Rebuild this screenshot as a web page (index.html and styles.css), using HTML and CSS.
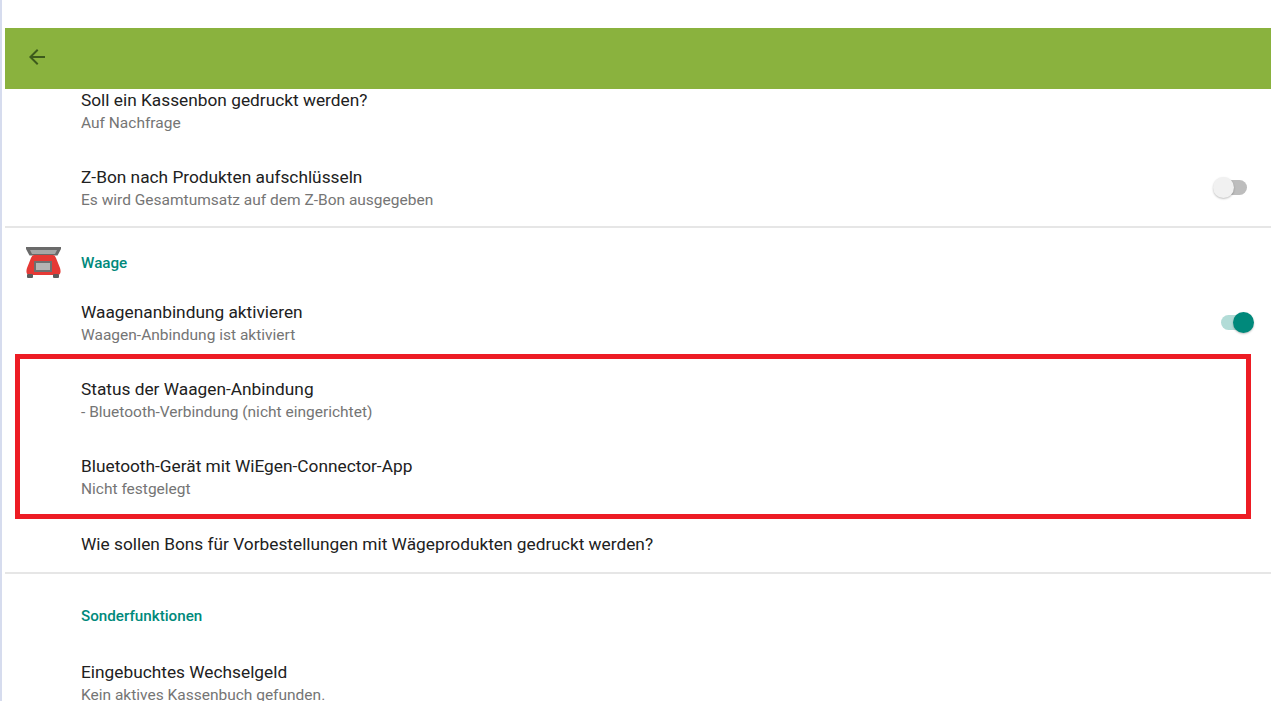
FILE: index.html
```html
<!DOCTYPE html>
<html lang="de">
<head>
    <meta charset="UTF-8">
    <title>Einstellungen</title>
    <link rel="stylesheet" href="styles.css">
</head>
<body>
    <div class="screen">
        <header class="toolbar">
            <svg class="back" viewBox="0 0 24 24" width="24" height="24"><path d="M20 11H7.83l5.59-5.59L12 4l-8 8 8 8 1.41-1.41L7.83 13H20z"/></svg>
        </header>
        <div class="settings">
            <div class="item first">
                <div class="title">Soll ein Kassenbon gedruckt werden?</div>
                <div class="sub">Auf Nachfrage</div>
            </div>
            <div class="item">
                <div class="title">Z-Bon nach Produkten aufschlüsseln</div>
                <div class="sub">Es wird Gesamtumsatz auf dem Z-Bon ausgegeben</div>
                <div class="switch off"><span class="track"></span><span class="thumb"></span></div>
            </div>
            <div class="group waage">
                <svg class="scale" viewBox="0 0 35 31" width="35" height="31">
                    <path d="M0 0h35v2l-3.500 6.500H3.500L0 2z" fill="#6a6a6a"/>
                    <path d="M4 3h27l-2 4H6z" fill="#a6a6a6"/>
                    <path d="M8 8h19q2 0 3 3l4 10q2 7-3 7H4q-5 0-3-7l4-10q1-3 3-3z" fill="#e53935"/>
                    <rect x="8" y="14" width="18" height="11" fill="#6e6e6e"/>
                    <rect x="10" y="16" width="14" height="7" fill="#b4b4b4"/>
                    <rect x="1" y="27" width="6" height="4" rx="1" fill="#5c5c5c"/>
                    <rect x="27" y="27" width="6" height="4" rx="1" fill="#5c5c5c"/>
                </svg>
                <div class="group-label">Waage</div>
            </div>
            <div class="item">
                <div class="title">Waagenanbindung aktivieren</div>
                <div class="sub">Waagen-Anbindung ist aktiviert</div>
                <div class="switch on"><span class="track"></span><span class="thumb"></span></div>
            </div>
            <div class="item">
                <div class="title">Status der Waagen-Anbindung</div>
                <div class="sub">- Bluetooth-Verbindung (nicht eingerichtet)</div>
            </div>
            <div class="item">
                <div class="title">Bluetooth-Gerät mit WiEgen-Connector-App</div>
                <div class="sub">Nicht festgelegt</div>
            </div>
            <div class="item single">
                <div class="title">Wie sollen Bons für Vorbestellungen mit Wägeprodukten gedruckt werden?</div>
            </div>
            <div class="group sonder">
                <div class="group-label">Sonderfunktionen</div>
            </div>
            <div class="item">
                <div class="title">Eingebuchtes Wechselgeld</div>
                <div class="sub">Kein aktives Kassenbuch gefunden.</div>
            </div>
        </div>
        <div class="highlight"></div>
    </div>
</body>
</html>
```

FILE: styles.css
```css
html, body {
    margin: 0;
    padding: 0;
    height: 100%;
    overflow: hidden;
    background: #fff;
}

body {
    font-family: Roboto, "Liberation Sans", sans-serif;
    color: #212121;
}

.screen {
    position: relative;
    height: 701px;
    overflow: hidden;
    box-sizing: border-box;
    border-left: 2px solid #d6dcee;
    padding: 28px 2px 0 3px;
}

.toolbar {
    height: 61px;
    box-sizing: border-box;
    background: #8ab23e;
    display: flex;
    align-items: center;
    padding: 0 0 3px 20px;
}

.back {
    fill: #3d5a1c;
}

.item {
    display: flex;
    flex-direction: column;
    justify-content: center;
    height: 77px;
    box-sizing: border-box;
    padding: 0 24px 0 76px;
    position: relative;
}

.first {
    height: 61px;
    justify-content: flex-start;
}

.single {
    height: 56px;
}

.title {
    font-size: 17.3px;
    line-height: 23px;
    color: #212121;
}

.sub {
    font-size: 15.5px;
    line-height: 22px;
    color: #757575;
}

.group {
    border-top: 2px solid #e6e6e6;
    display: flex;
    align-items: flex-end;
    padding: 0 0 0 76px;
    position: relative;
    box-sizing: border-box;
}

.waage {
    height: 59px;
    margin-top: -1px;
    padding-bottom: 12px;
}

.sonder {
    height: 73px;
    padding-bottom: 19px;
}

.group-label {
    font-size: 15.2px;
    font-weight: 500;
    line-height: 20px;
    color: #00897b;
}

.scale {
    position: absolute;
    left: 21px;
    top: 19px;
}

.switch {
    position: absolute;
    right: 24px;
    top: 50%;
    width: 26px;
    height: 15px;
    margin-top: -9px;
}

.track {
    display: block;
    height: 15px;
    border-radius: 8px;
}

.thumb {
    position: absolute;
    top: -3px;
    width: 21px;
    height: 21px;
    border-radius: 50%;
    box-shadow: 0 1px 2px rgba(0, 0, 0, 0.25);
}

.off .track {
    background: #bdbdbd;
}

.off .thumb {
    left: -8px;
    background: #f1f1f1;
}

.on .track {
    background: #b2dcd7;
}

.on .thumb {
    right: -7px;
    background: #00897b;
}

.highlight {
    position: absolute;
    left: 13px;
    top: 354px;
    width: 1236px;
    height: 165px;
    box-sizing: border-box;
    border: 5px solid #ed1c24;
}
```
